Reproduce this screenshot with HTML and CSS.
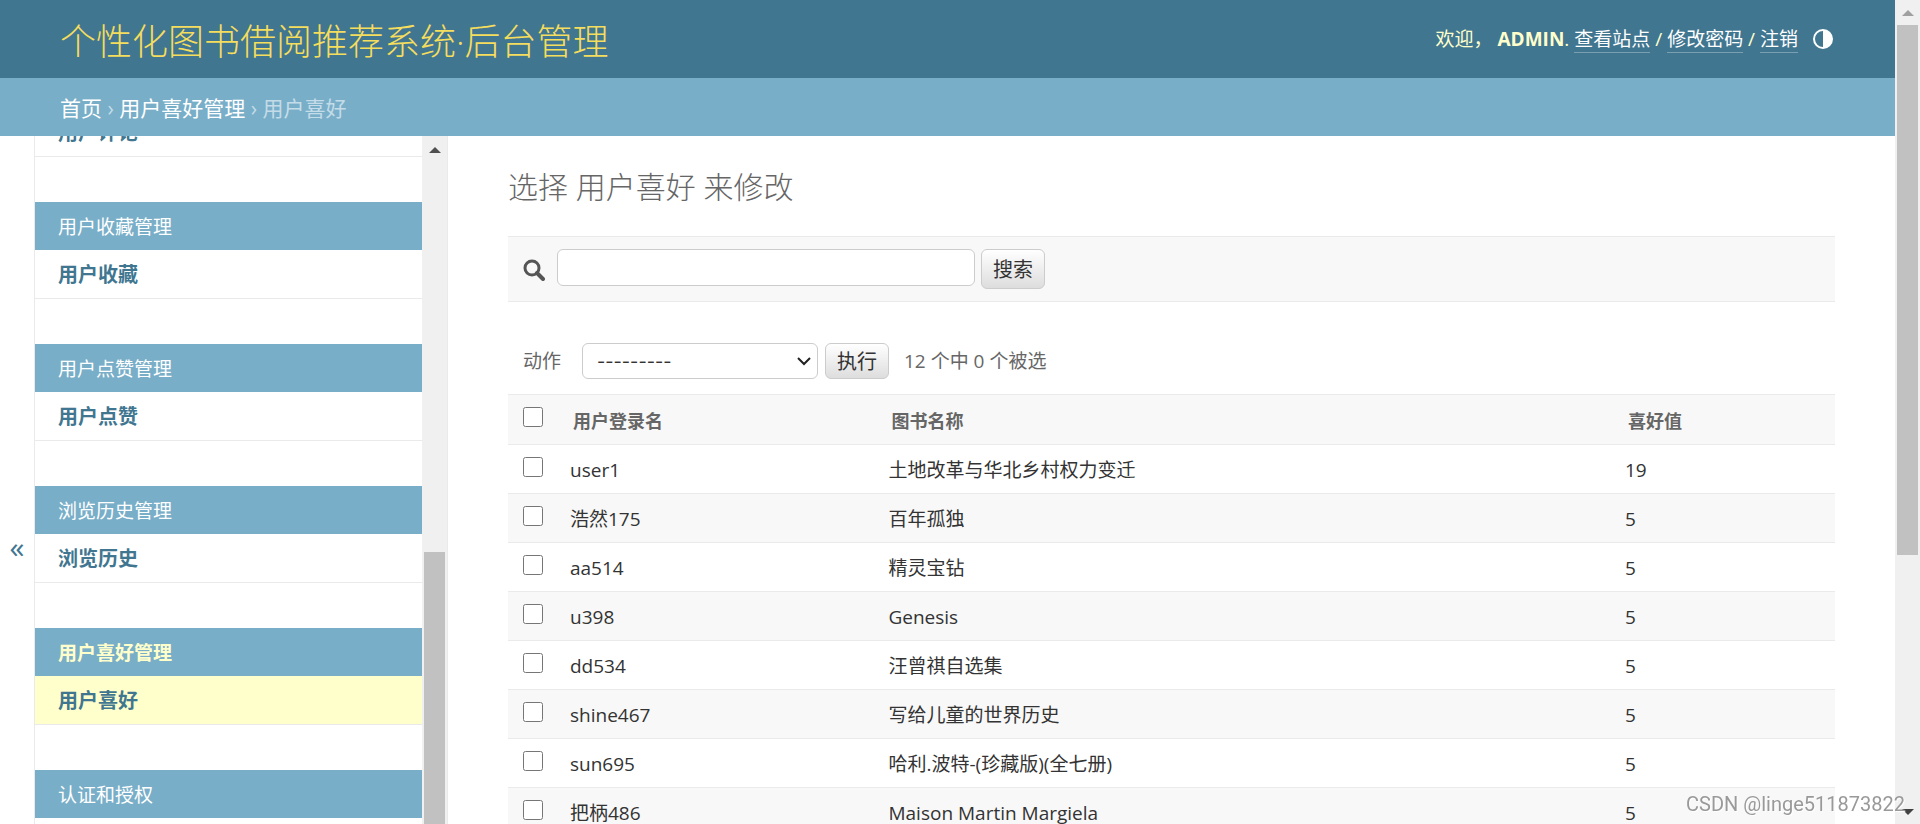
FILE: index.html
```html
<!DOCTYPE html>
<html lang="zh-Hans">
<head>
<meta charset="utf-8">
<title>选择 用户喜好 来修改</title>
<link rel="stylesheet" href="styles.css">
</head>
<body>
<div class="window">
  <div class="page">
    <header class="header">
      <h1 class="site-name">个性化图书借阅推荐系统·后台管理</h1>
      <div class="user-tools">
        <span class="welcome">欢迎，</span>
        <span><strong>ADMIN</strong>. <a href="#">查看站点</a> / <a href="#">修改密码</a> / <a href="#">注销</a></span>
        <button class="theme-toggle" type="button" aria-label="切换主题">
          <svg viewBox="0 0 20 20" width="20" height="20"><circle cx="10" cy="10" r="9" fill="none" stroke="#fff" stroke-width="2"/><path d="M10 1a9 9 0 0 1 0 18z" fill="#fff"/></svg>
        </button>
      </div>
    </header>
    <nav class="breadcrumbs"><a href="#">首页</a> › <a href="#">用户喜好管理</a> › 用户喜好</nav>
    <div class="main">
      <button class="nav-toggle" type="button" aria-label="切换导航">«</button>
      <nav class="sidebar">
        <div class="modules">
          <section class="module"><a class="model" href="#">用户评论</a></section>
          <section class="module"><h2 class="caption">用户收藏管理</h2><a class="model" href="#">用户收藏</a></section>
          <section class="module"><h2 class="caption">用户点赞管理</h2><a class="model" href="#">用户点赞</a></section>
          <section class="module"><h2 class="caption">浏览历史管理</h2><a class="model" href="#">浏览历史</a></section>
          <section class="module current"><h2 class="caption">用户喜好管理</h2><a class="model" href="#">用户喜好</a></section>
          <section class="module"><h2 class="caption">认证和授权</h2></section>
        </div>
        <div class="scrollbar side-scroll">
          <svg class="arrow" viewBox="0 0 12 6" width="12" height="6"><path d="M0 6L6 0l6 6z" fill="#505050"/></svg>
          <div class="thumb"></div>
        </div>
      </nav>
      <main class="content">
        <h2 class="title">选择 用户喜好 来修改</h2>
        <form class="search">
          <label for="searchbar" aria-label="搜索"><svg viewBox="0 0 22 22" width="22" height="22"><circle cx="9" cy="9" r="7" fill="none" stroke="#555" stroke-width="3"/><path d="M14 14l6 6" stroke="#555" stroke-width="4" stroke-linecap="round"/></svg></label>
          <input id="searchbar" class="search-box" type="text">
          <button class="button tall" type="submit">搜索</button>
        </form>
        <form class="actions">
          <label for="action">动作</label>
          <span class="select-wrap">
            <select id="action"><option>---------</option></select>
            <svg viewBox="0 0 14 10" width="14" height="10"><path d="M1 2l6 6 6-6" fill="none" stroke="#222" stroke-width="2"/></svg>
          </span>
          <button class="button" type="button">执行</button>
          <span class="counter">12 个中 0 个被选</span>
        </form>
        <table class="results">
          <colgroup><col class="c-check"><col class="c-user"><col class="c-book"><col class="c-score"></colgroup>
          <thead><tr><th><input type="checkbox" aria-label="全选"></th><th>用户登录名</th><th>图书名称</th><th>喜好值</th></tr></thead>
          <tbody>
            <tr><td><input type="checkbox" aria-label="user1"></td><td>user1</td><td>土地改革与华北乡村权力变迁</td><td>19</td></tr>
            <tr><td><input type="checkbox" aria-label="浩然175"></td><td>浩然175</td><td>百年孤独</td><td>5</td></tr>
            <tr><td><input type="checkbox" aria-label="aa514"></td><td>aa514</td><td>精灵宝钻</td><td>5</td></tr>
            <tr><td><input type="checkbox" aria-label="u398"></td><td>u398</td><td>Genesis</td><td>5</td></tr>
            <tr><td><input type="checkbox" aria-label="dd534"></td><td>dd534</td><td>汪曾祺自选集</td><td>5</td></tr>
            <tr><td><input type="checkbox" aria-label="shine467"></td><td>shine467</td><td>写给儿童的世界历史</td><td>5</td></tr>
            <tr><td><input type="checkbox" aria-label="sun695"></td><td>sun695</td><td>哈利.波特-(珍藏版)(全七册)</td><td>5</td></tr>
            <tr><td><input type="checkbox" aria-label="把柄486"></td><td>把柄486</td><td>Maison Martin Margiela</td><td>5</td></tr>
          </tbody>
        </table>
      </main>
    </div>
  </div>
  <div class="scrollbar page-scroll">
    <svg class="arrow" viewBox="0 0 12 6" width="12" height="6"><path d="M0 6L6 0l6 6z" fill="#a0a0a0"/></svg>
    <div class="thumb"></div>
    <svg class="arrow end" viewBox="0 0 12 6" width="12" height="6"><path d="M0 0l6 6 6-6z" fill="#404040"/></svg>
  </div>
  <div class="watermark">CSDN @linge511873822</div>
</div>
</body>
</html>
```
FILE: styles.css
```css
* { box-sizing: border-box; }
body {
  margin: 0;
  color: #333;
  background: #fff;
  font: 19px/28px "Open Sans", "Noto Sans CJK SC", sans-serif;
}
a { color: inherit; text-decoration: none; }
h1, h2 { margin: 0; font-weight: 300; }
button, input, select { font: inherit; color: inherit; }

.window { display: flex; height: 100vh; overflow: hidden; }
.page { flex: 1; min-width: 0; display: flex; flex-direction: column; }

.header {
  display: flex;
  align-items: center;
  justify-content: space-between;
  height: 78px;
  flex: none;
  padding: 0 60px;
  background: #417690;
  color: #ffc;
}
.site-name {
  color: #f5dd5d;
  font-size: 36px;
  line-height: 48px;
  padding-top: 6px;
}
.user-tools { display: flex; align-items: center; }
.user-tools strong { font-weight: 700; }
.user-tools a { color: #fff; border-bottom: 1px solid #7a9fb1; }
.welcome { margin-right: 5px; }
.theme-toggle { display: flex; margin: 0 2px 0 15px; padding: 0; border: 0; background: none; }

.breadcrumbs {
  flex: none;
  padding: 16px 60px 14px;
  background: #79aec8;
  color: #c4dce8;
  font-size: 21px;
}
.breadcrumbs a { color: #fff; }

.main { flex: 1; min-height: 0; display: flex; }
.nav-toggle {
  width: 35px;
  flex: none;
  padding: 134px 0 0;
  border: 0;
  border-right: 1px solid #eaeaea;
  background: #fff;
  color: #417690;
  font-size: 30px;
}
.sidebar { display: flex; width: 413px; flex: none; overflow: hidden; border-right: 1px solid #eaeaea; }
.modules { flex: 1; margin-top: -28px; }
.module { margin-bottom: 45px; }
.caption {
  padding: 11px 23px 9px;
  background: #79aec8;
  color: #fff;
  font-size: 19px;
  font-weight: 400;
}
.model {
  display: block;
  padding: 11px 23px 9px;
  border-bottom: 1px solid #eaeaea;
  color: #417690;
  font-size: 20px;
  font-weight: 700;
}
.current .caption { color: #ffc; font-weight: 700; }
.current .model { background: #ffc; }

.scrollbar { display: flex; flex-direction: column; align-items: center; width: 25px; flex: none; background: #f0f0f0; }
.thumb { width: 21px; background: #c1c1c1; }
.arrow { flex: none; margin: 10px 0 9px; }
.arrow.end { margin-top: auto; }
.side-scroll .arrow { margin-top: 11px; }
.side-scroll .thumb { flex: 1; margin-top: 390px; }
.page-scroll .thumb { height: 530px; }

.content { flex: 1; min-width: 0; padding: 30px 60px 0; }
.title { margin-bottom: 28px; color: #666; font-size: 30px; line-height: 42px; }

.search {
  display: flex;
  align-items: flex-start;
  height: 66px;
  padding: 12px 15px;
  border: solid #eaeaea;
  border-width: 1px 0;
  background: #f8f8f8;
}
.search label { display: flex; width: 34px; padding-top: 10px; }
.search-box { width: 418px; height: 37px; margin-right: 6px; border: 1px solid #ccc; border-radius: 6px; background: #fff; }
.button {
  height: 36px;
  padding: 2px 11px 0;
  border: 1px solid #ccc;
  border-radius: 6px;
  background: linear-gradient(#fff, #ddd);
  font-size: 20px;
}
.button.tall { height: 40px; }

.actions { display: flex; align-items: center; padding: 41px 15px 15px; color: #666; }
.actions label { width: 59px; }
.select-wrap { position: relative; display: flex; margin-right: 7px; }
.select-wrap select {
  appearance: none;
  width: 236px;
  height: 36px;
  padding: 2px 14px 0;
  border: 1px solid #ccc;
  border-radius: 6px;
  background: #fff;
  color: #333;
  font-family: Inter, "Noto Sans CJK SC", sans-serif;
  font-size: 18px;
}
.select-wrap svg { position: absolute; right: 7px; top: 13px; pointer-events: none; }
.actions .button { color: #333; }
.counter { margin-left: 15px; }

.results { width: 100%; table-layout: fixed; border-collapse: separate; border-spacing: 0; border-top: 1px solid #eaeaea; }
.c-check { width: 50px; }
.c-user { width: 24%; }
.c-score { width: 222px; }
.results th, .results td { height: 49px; padding: 2px 12px 0; border-bottom: 1px solid #eaeaea; text-align: left; }
.results th { height: 50px; padding: 2px 15px 0; background: #f8f8f8; color: #666; font-size: 18px; font-weight: 700; }
.results tr > :first-child { padding: 12px 15px 0; vertical-align: top; }
.results tbody tr:nth-child(even) { background: #f8f8f8; }
.results input { display: block; width: 20px; height: 20px; margin: 0; }

.watermark {
  position: fixed;
  right: 15px;
  bottom: 6px;
  color: #999;
  font: 20px/28px Roboto, sans-serif;
  text-shadow: 1px 1px 1px #fff;
}
```
